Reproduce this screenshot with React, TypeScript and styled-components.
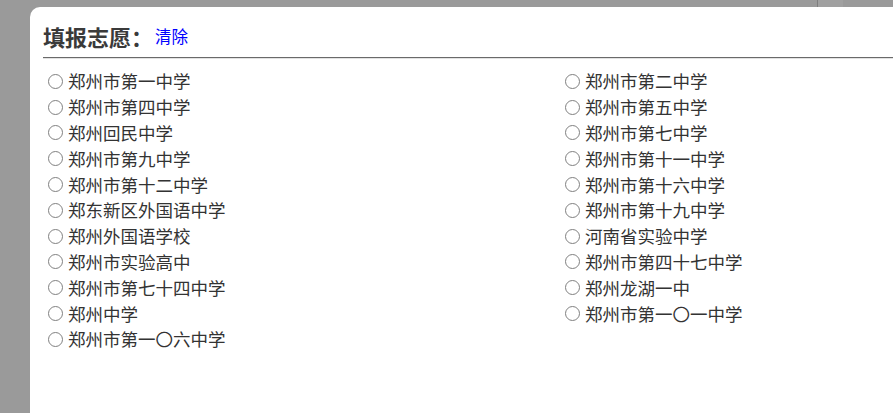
import React from "react"
import styled, {createGlobalStyle} from "styled-components"

const GlobalStyle = createGlobalStyle`
    html, body{
        margin: 0;
        padding: 0;
        height: 100%;
        overflow: hidden;
    }
    body{
        background: linear-gradient(to right, #9a9a9a 817px, #7e7e7e 817px, #7e7e7e 818px, #a0a0a0 818px, #a0a0a0 843px, #9a9a9a 843px);
        font-family: "Noto Sans CJK SC", "Noto Sans", sans-serif;
    }
`

const Page = styled.div`
    padding: 7px 0 0 30px;
    height: 100vh;
    box-sizing: border-box;
`

const Card = styled.div`
    width: 1060px;
    height: 100%;
    background: #fff;
    border-radius: 10px 0 0 0;
    padding: 13px 13px 0 13px;
    box-sizing: border-box;
`

const TitleRow = styled.div`
    display: flex;
    align-items: center;
    height: 32px;
`

const Title = styled.span`
    font-size: 22px;
    font-weight: bold;
    color: #3a3a3a;
`

const ClearLink = styled.a`
    font-size: 16.5px;
    color: #0000ff;
    text-decoration: none;
    margin-left: 2px;
    cursor: pointer;
`

const Divider = styled.hr`
    margin: 5px 0 9px 0;
    border: 0;
    border-top: 1px solid #6a6a6a;
    border-bottom: 1px solid #e2e2e2;
    height: 0;
`

const SchoolList = styled.ul`
    list-style: none;
    margin: 0;
    padding: 0;
    display: grid;
    grid-template-columns: 517px 517px;
`

const SchoolItem = styled.li`
    display: flex;
    align-items: center;
    height: 25.8px;
`

const Radio = styled.input`
    appearance: none;
    width: 15px;
    height: 15px;
    margin: 1px 5px 0 5px;
    border: 1.3px solid #808080;
    border-radius: 50%;
    box-sizing: border-box;
    background: #fff;
    flex-shrink: 0;
`

const SchoolName = styled.span`
    font-size: 17.5px;
    color: #333;
    white-space: nowrap;
`

const schools = [
    "郑州市第一中学", "郑州市第二中学",
    "郑州市第四中学", "郑州市第五中学",
    "郑州回民中学", "郑州市第七中学",
    "郑州市第九中学", "郑州市第十一中学",
    "郑州市第十二中学", "郑州市第十六中学",
    "郑东新区外国语中学", "郑州市第十九中学",
    "郑州外国语学校", "河南省实验中学",
    "郑州市实验高中", "郑州市第四十七中学",
    "郑州市第七十四中学", "郑州龙湖一中",
    "郑州中学", "郑州市第一〇一中学",
    "郑州市第一〇六中学",
]

export default function App() {
    return (
        <>
            <GlobalStyle />
            <Page>
                <Card>
                    <TitleRow>
                        <Title>填报志愿：</Title>
                        <ClearLink>清除</ClearLink>
                    </TitleRow>
                    <Divider />
                    <SchoolList>
                        {schools.map((name) => (
                            <SchoolItem key={name}>
                                <Radio type="radio" name="school" />
                                <SchoolName>{name}</SchoolName>
                            </SchoolItem>
                        ))}
                    </SchoolList>
                </Card>
            </Page>
        </>
    )
}
